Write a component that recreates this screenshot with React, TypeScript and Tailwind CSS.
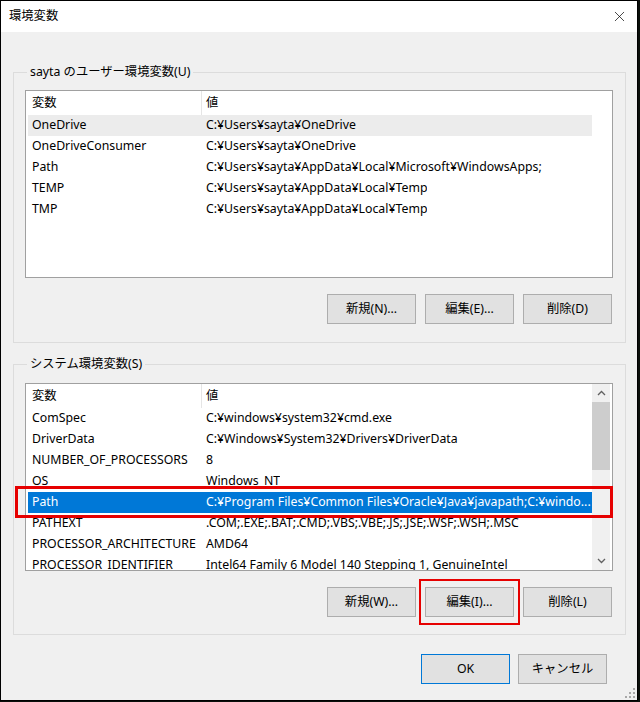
import { X } from 'lucide-react';

type Row = [string, string];

const userVars: Row[] = [
  ['OneDrive', 'C:¥Users¥sayta¥OneDrive'],
  ['OneDriveConsumer', 'C:¥Users¥sayta¥OneDrive'],
  ['Path', 'C:¥Users¥sayta¥AppData¥Local¥Microsoft¥WindowsApps;'],
  ['TEMP', 'C:¥Users¥sayta¥AppData¥Local¥Temp'],
  ['TMP', 'C:¥Users¥sayta¥AppData¥Local¥Temp'],
];

const systemVars: Row[] = [
  ['ComSpec', 'C:¥windows¥system32¥cmd.exe'],
  ['DriverData', 'C:¥Windows¥System32¥Drivers¥DriverData'],
  ['NUMBER_OF_PROCESSORS', '8'],
  ['OS', 'Windows_NT'],
  ['Path', 'C:¥Program Files¥Common Files¥Oracle¥Java¥javapath;C:¥windo...'],
  ['PATHEXT', '.COM;.EXE;.BAT;.CMD;.VBS;.VBE;.JS;.JSE;.WSF;.WSH;.MSC'],
  ['PROCESSOR_ARCHITECTURE', 'AMD64'],
  ['PROCESSOR_IDENTIFIER', 'Intel64 Family 6 Model 140 Stepping 1, GenuineIntel'],
];

function Chevron({ up }: { up?: boolean }) {
  return (
    <svg width="9" height="6" viewBox="0 0 9 6" className="text-[#606060]">
      <path
        d={up ? 'M1 5 L4.5 1.5 L8 5' : 'M1 1 L4.5 4.5 L8 1'}
        fill="none"
        stroke="currentColor"
        strokeWidth="1.3"
      />
    </svg>
  );
}

function ListView({
  rows,
  hot,
  selected,
  scrollbar,
}: {
  rows: Row[];
  hot?: number;
  selected?: number;
  scrollbar?: boolean;
}) {
  return (
    <div className="flex w-[588px] h-[188px] border border-[#a0a0a0] bg-white overflow-hidden text-[12.3px]">
      <div className="w-[566px] shrink-0 flex flex-col">
        {/* header */}
        <div className="flex h-[24px] shrink-0 items-center">
          <div className="w-[176px] h-full pl-[6px] flex items-center border-r border-[#e5e5e5]">変数</div>
          <div className="pl-[4px]">値</div>
        </div>
        {rows.map(([name, value], i) => {
          const isSel = i === selected;
          const isHot = i === hot;
          return (
            <div
              key={name + i}
              className={`ml-[2px] w-[564px] flex h-[21px] shrink-0 items-center whitespace-nowrap ${
                isSel ? 'bg-[#0078d7] text-white' : isHot ? 'bg-[#ececec]' : ''
              }`}
            >
              <div className="w-[174px] shrink-0 pl-[4px] overflow-hidden">{name}</div>
              <div className="pl-[4px] overflow-hidden">{value}</div>
            </div>
          );
        })}
      </div>
      {scrollbar && (
        <div className="w-[18px] shrink-0 flex flex-col bg-[#f0f0f0]">
          <div className="h-[18px] flex items-center justify-center">
            <Chevron up />
          </div>
          <div className="h-[68px] bg-[#cdcdcd]" />
          <div className="flex-1" />
          <div className="h-[18px] flex items-center justify-center">
            <Chevron />
          </div>
        </div>
      )}
    </div>
  );
}

function Btn({ children, primary }: { children: React.ReactNode; primary?: boolean }) {
  return (
    <button
      className={`w-[89px] h-[30px] bg-[#e1e1e1] border text-[12.3px] text-black flex items-center justify-center ${
        primary ? 'border-[#0078d7]' : 'border-[#adadad]'
      }`}
    >
      {children}
    </button>
  );
}

export default function App() {
  return (
    <div className="w-[640px] h-[702px] bg-[#0b0f0b] font-['Noto_Sans','Noto_Sans_CJK_JP',sans-serif] text-[12.3px] text-black">
      <div className="relative w-[638px] h-[701px] border border-black bg-[#f0f0f0] flex flex-col">
        {/* title bar */}
        <div className="h-[31px] shrink-0 bg-white flex items-center justify-between pl-[8px] pr-[9px]">
          <span>環境変数</span>
          <X className="w-[17px] h-[17px] text-black" strokeWidth={1} />
        </div>

        <div className="pl-[12px] pr-[11px] flex flex-col">
          {/* user variables */}
          <fieldset className="mt-[32px] border border-[#dcdcdc] pl-[11px] pr-[12px] pt-[10px] pb-[18px]">
            <legend className="ml-[2px] px-[3px] leading-4">sayta のユーザー環境変数(U)</legend>
            <ListView rows={userVars} hot={0} />
            <div className="mt-[16px] mr-[1px] flex justify-end gap-[9px]">
              <Btn>新規(N)...</Btn>
              <Btn>編集(E)...</Btn>
              <Btn>削除(D)</Btn>
            </div>
          </fieldset>

          {/* system variables */}
          <fieldset className="mt-[13px] border border-[#dcdcdc] pl-[11px] pr-[12px] pt-[11px] pb-[17px]">
            <legend className="ml-[2px] px-[3px] leading-4">システム環境変数(S)</legend>
            <div className="relative">
              <ListView rows={systemVars} selected={4} scrollbar />
              <div className="absolute left-[-10px] right-0 top-[103px] h-[32px] border-[3px] border-[#e60000]" />
            </div>
            <div className="mt-[16px] mr-[1px] flex justify-end gap-[9px]">
              <Btn>新規(W)...</Btn>
              <div className="relative">
                <Btn>編集(I)...</Btn>
                <div className="absolute -left-[6px] -right-[6px] -top-[8px] -bottom-[8px] border-2 border-[#e60000]" />
              </div>
              <Btn>削除(L)</Btn>
            </div>
          </fieldset>
        </div>

        {/* dialog buttons */}
        <div className="mt-[19px] pr-[30px] flex justify-end gap-[8px]">
          <Btn primary>OK</Btn>
          <Btn>キャンセル</Btn>
        </div>

        {/* size grip */}
        <svg width="10" height="10" viewBox="0 0 10 10" className="absolute right-[2px] bottom-[2px] text-[#a8a8a8]">
          <rect x="8" y="0" width="2" height="2" fill="currentColor" />
          <rect x="4" y="4" width="2" height="2" fill="currentColor" />
          <rect x="8" y="4" width="2" height="2" fill="currentColor" />
          <rect x="0" y="8" width="2" height="2" fill="currentColor" />
          <rect x="4" y="8" width="2" height="2" fill="currentColor" />
          <rect x="8" y="8" width="2" height="2" fill="currentColor" />
        </svg>
      </div>
    </div>
  );
}
